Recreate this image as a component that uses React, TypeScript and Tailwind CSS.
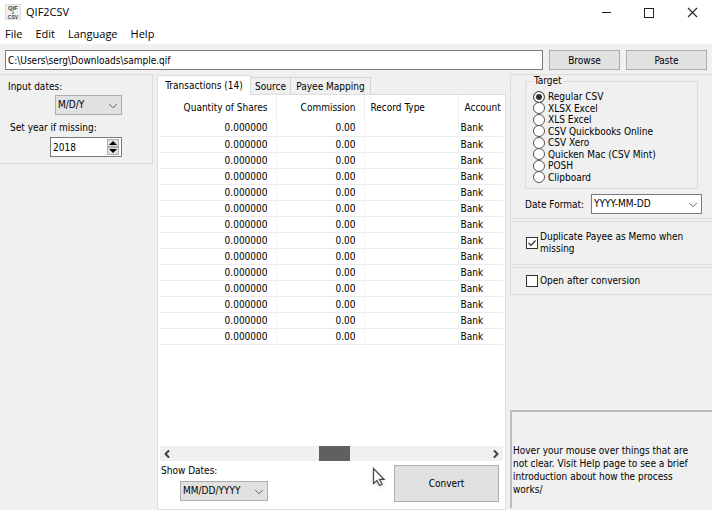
import { useState } from "react"
import { ChevronDown, ChevronLeft, ChevronRight } from "lucide-react"

const menus = ["File", "Edit", "Language", "Help"]

const targets = [
  "Regular CSV",
  "XLSX Excel",
  "XLS Excel",
  "CSV Quickbooks Online",
  "CSV Xero",
  "Quicken Mac (CSV Mint)",
  "POSH",
  "Clipboard",
]

const rows = Array.from({ length: 14 }, () => ({
  quantity: "0.000000",
  commission: "0.00",
  recordType: "",
  account: "Bank",
}))

function Select({ id, options, className }: { id: string; options: string[]; className: string }) {
  return (
    <div className={"relative h-5 " + className}>
      <select id={id} className="block h-full w-full appearance-none bg-transparent pl-[2px] pr-5 leading-4 outline-none">
        {options.map((o) => <option key={o}>{o}</option>)}
      </select>
      <ChevronDown className="pointer-events-none absolute right-[1px] top-[3px] h-[14px] w-[14px] text-[#505050]" strokeWidth={1.5} />
    </div>
  )
}

function TitleBar() {
  return (
    <div className="flex h-6 items-center justify-between bg-white pl-[5px] pr-[14px]">
      <div className="flex items-center gap-[5px]">
        <svg className="h-4 w-4" viewBox="0 0 16 16">
          <rect x="0.5" y="0.5" width="15" height="15" fill="#f1f1f1" stroke="#dcdcdc" />
          <text x="8" y="5.500" textAnchor="middle" fontSize="6" fontWeight="bold" fontFamily="Liberation Sans, sans-serif" fill="#444">QIF</text>
          <path d="M8 6v4M7 8.500l1 1.500 1-1.500" stroke="#777" strokeWidth="0.800" fill="none" />
          <text x="8" y="15" textAnchor="middle" fontSize="5" fontWeight="bold" fontFamily="Liberation Sans, sans-serif" fill="#444">CSV</text>
        </svg>
        <h1 className="font-['Open_Sans',sans-serif] text-[11px]">QIF2CSV</h1>
      </div>
      <div className="flex gap-8">
        <button aria-label="Minimize">
          <svg className="h-[11px] w-[11px]" viewBox="0 0 11 11"><path d="M1 5.500h9" stroke="#222" /></svg>
        </button>
        <button aria-label="Maximize">
          <svg className="h-[11px] w-[11px]" viewBox="0 0 11 11"><rect x="0.500" y="1.500" width="9" height="9" fill="none" stroke="#222" /></svg>
        </button>
        <button aria-label="Close">
          <svg className="h-[11px] w-[11px]" viewBox="0 0 11 11"><path d="M1 1l9 9M10 1l-9 9" stroke="#222" strokeWidth="1.100" /></svg>
        </button>
      </div>
    </div>
  )
}

function InputPanel() {
  const [year, setYear] = useState(2018)
  return (
    <aside className="w-[153px] shrink-0">
      <div className="flex h-[90px] flex-col border-y border-r border-[#dcdcdc] pl-2 pt-1">
        <label htmlFor="input-dates" className="leading-4">Input dates:</label>
        <Select id="input-dates" options={["M/D/Y", "D/M/Y", "Y/M/D"]} className="ml-[47px] w-[67px] border border-[#adadad] bg-[#e1e1e1]" />
        <label htmlFor="year" className="mt-1 pl-[2px] leading-[18px]">Set year if missing:</label>
        <div className="ml-[42px] flex h-5 w-[72px] shrink-0 items-center border border-[#7a7a7a] bg-white pr-[2px]">
          <input
            id="year"
            value={year}
            onChange={(e) => setYear(Number(e.target.value) || 0)}
            className="w-full min-w-0 flex-1 pl-[2px] outline-none"
          />
          <div className="flex flex-col">
            <button aria-label="Next year" onClick={() => setYear(year + 1)} className="flex h-2 w-3 items-center justify-center border border-[#adadad] bg-[#e1e1e1]">
              <svg className="h-1 w-2" viewBox="0 0 8 4"><path d="M4 0l4 4H0z" /></svg>
            </button>
            <button aria-label="Previous year" onClick={() => setYear(year - 1)} className="flex h-2 w-3 items-center justify-center border border-[#adadad] bg-[#e1e1e1]">
              <svg className="h-1 w-2" viewBox="0 0 8 4"><path d="M4 4l4-4H0z" /></svg>
            </button>
          </div>
        </div>
      </div>
    </aside>
  )
}

function Transactions() {
  return (
    <table className="w-full table-fixed border-collapse">
      <colgroup>
        <col className="w-[116px]" />
        <col className="w-[88px]" />
        <col className="w-[94px]" />
        <col />
      </colgroup>
      <thead>
        <tr className="h-[25px] whitespace-nowrap">
          <th className="border-r border-[#ebebeb] pr-2 text-right font-normal">Quantity of Shares</th>
          <th className="border-r border-[#ebebeb] pr-2 text-right font-normal">Commission</th>
          <th className="border-r border-[#ebebeb] pl-[6px] text-left font-normal">Record Type</th>
          <th className="pl-[6px] text-left font-normal">Account</th>
        </tr>
      </thead>
      <tbody>
        {rows.map((row, i) => (
          <tr key={i} className="h-4 border-b border-[#ebebeb] leading-[15px]">
            <td className="border-r border-[#f3f3f3] pr-2 text-right">{row.quantity}</td>
            <td className="border-r border-[#f3f3f3] pr-2 text-right">{row.commission}</td>
            <td className="border-r border-[#f3f3f3]">{row.recordType}</td>
            <td className="pl-[2px]">{row.account}</td>
          </tr>
        ))}
      </tbody>
    </table>
  )
}

function Center() {
  return (
    <section className="mx-1 flex min-w-0 flex-1 flex-col pt-[1px]">
      <div role="tablist" className="flex items-end whitespace-nowrap">
        <button role="tab" aria-selected="true" className="z-10 -mb-px h-5 w-[94px] border border-b-0 border-[#dcdcdc] bg-white">Transactions (14)</button>
        <button role="tab" aria-selected="false" className="h-[17px] w-10 border border-b-0 border-l-0 border-[#d4d4d4]">Source</button>
        <button role="tab" aria-selected="false" className="h-[17px] w-20 border border-b-0 border-l-0 border-[#d4d4d4]">Payee Mapping</button>
      </div>
      <div className="flex flex-1 flex-col border border-[#dcdcdc] bg-white px-[2px]">
        <div className="flex-1">
          <Transactions />
        </div>
        <div className="flex h-[15px] items-center bg-[#f0f0f0] px-[1px]">
          <button aria-label="Scroll left"><ChevronLeft className="h-3 w-3 text-[#404040]" strokeWidth={4} /></button>
          <div className="h-full flex-1">
            <div className="ml-[46%] h-full w-[31px] bg-[#606060]" />
          </div>
          <button aria-label="Scroll right"><ChevronRight className="h-3 w-3 text-[#404040]" strokeWidth={4} /></button>
        </div>
        <div className="flex h-12 justify-between pl-[1px] pr-1 pt-1">
          <div>
            <label htmlFor="show-dates" className="block leading-3">Show Dates:</label>
            <Select id="show-dates" options={["MM/DD/YYYY", "DD/MM/YYYY"]} className="ml-[19px] mt-1 w-[88px] border border-[#adadad] bg-[#e1e1e1]" />
          </div>
          <button className="h-[37px] w-[105px] border border-[#adadad] bg-[#e1e1e1]">Convert</button>
        </div>
      </div>
    </section>
  )
}

function Options() {
  return (
    <aside className="flex w-[202px] shrink-0 flex-col">
      <div className="border border-r-0 border-[#dcdcdc] pb-1 pl-[14px] pr-[10px]">
        <fieldset className="mr-1 h-[114px] border border-[#dcdcdc] pl-[7px]">
          <legend className="px-[1px] leading-3">Target</legend>
          <div className="mt-1 grid h-[92px] grid-rows-8">
            {targets.map((t, i) => (
              <label key={t} className="flex items-center gap-[3px] leading-[11px]">
                <input
                  type="radio"
                  name="target"
                  defaultChecked={i === 0}
                  className="h-3 w-3 shrink-0 appearance-none rounded-full border border-[#555] bg-white checked:bg-[#333] checked:shadow-[inset_0_0_0_2px_white]"
                />
                {t}
              </label>
            ))}
          </div>
        </fieldset>
        <div className="mt-[5px] flex items-center justify-between">
          <label htmlFor="date-format">Date Format:</label>
          <Select id="date-format" options={["YYYY-MM-DD", "MM/DD/YYYY"]} className="w-[111px] border border-[#7a7a7a] bg-white" />
        </div>
      </div>
      <div className="mt-[2px] flex h-11 items-center border border-r-0 border-[#dcdcdc] pl-[15px] pr-3">
        <Check label="Duplicate Payee as Memo when missing" checked />
      </div>
      <div className="mt-[2px] flex h-7 items-center border border-r-0 border-[#dcdcdc] pl-[15px] pr-3">
        <Check label="Open after conversion" />
      </div>
      <div className="mt-auto mb-[2px] h-[98px] border-l-2 border-t-2 border-[#bcbcbc] pl-[1px] pr-5 pt-8 leading-[13px]">
        <p>Hover your mouse over things that are not clear. Visit Help page to see a brief introduction about how the process works/</p>
      </div>
    </aside>
  )
}

function Check({ label, checked }: { label: string; checked?: boolean }) {
  return (
    <label className="flex items-center gap-[2px] leading-3">
      <span className="relative h-3 w-3 shrink-0">
        <input type="checkbox" defaultChecked={checked} className="peer block h-3 w-3 appearance-none border border-[#333] bg-white" />
        <svg className="pointer-events-none absolute inset-0 hidden h-3 w-3 peer-checked:block" viewBox="0 0 12 12">
          <path d="M2.500 6l2.500 2.500 4.500-5" fill="none" stroke="#333" strokeWidth="1.200" />
        </svg>
      </span>
      <span>{label}</span>
    </label>
  )
}

export default function App() {
  return (
    <div className="relative flex min-h-screen flex-col bg-[#f0f0f0] font-['DejaVu_Sans_Condensed','DejaVu_Sans',sans-serif] text-[10px] text-black">
      <TitleBar />
      <nav className="flex h-6 items-center gap-[13px] bg-white px-[5px] pb-1 font-['Open_Sans',sans-serif] text-[11px] -mb-1">
        {menus.map((m) => <button key={m}>{m}</button>)}
      </nav>
      <div className="z-10 flex gap-[6px] bg-[#f0f0f0] px-[5px] pb-1 pt-[6px]">
        <input aria-label="Input file" defaultValue="C:\Users\serg\Downloads\sample.qif" className="h-5 min-w-0 flex-1 border border-[#7a7a7a] bg-white px-[2px] outline-none" />
        <button className="h-5 w-[71px] border border-[#adadad] bg-[#e1e1e1]">Browse</button>
        <button className="h-5 w-[81px] border border-[#adadad] bg-[#e1e1e1]">Paste</button>
      </div>
      <main className="flex flex-1">
        <InputPanel />
        <Center />
        <Options />
      </main>
      {/* mouse pointer */}
      <svg className="pointer-events-none absolute left-[372px] top-[467px] h-5 w-[14px] drop-shadow-sm" viewBox="0 0 14 20">
        <path d="M1.500 1.500v15l3.500-3 2.500 5 2.500-1.200-2.500-5h4.500z" fill="white" stroke="#444" strokeWidth="1.200" />
      </svg>
    </div>
  )
}
